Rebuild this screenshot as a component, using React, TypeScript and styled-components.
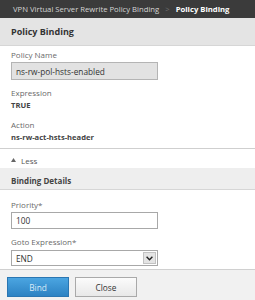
import React from "react";
import styled, { createGlobalStyle } from "styled-components";

const GlobalStyle = createGlobalStyle`
  html, body {
    margin: 0;
    padding: 0;
    background: #ffffff;
    font-family: "Open Sans", "Noto Sans", sans-serif;
  }
`;

const Page = styled.div`
  width: 255px;
  height: 300px;
  display: flex;
  flex-direction: column;
  overflow: hidden;
`;

const TopBar = styled.div`
  height: 18px;
  flex-shrink: 0;
  background: #3b3b3b;
  display: flex;
  align-items: center;
  padding-left: 13px;
  gap: 6px;
  font-size: 7.7px;
  color: #d8d8d8;
  white-space: nowrap;
`;

const Crumb = styled.span<{ $current?: boolean }>`
  color: ${(p) => (p.$current ? "#ffffff" : "#d4d4d4")};
  font-weight: ${(p) => (p.$current ? 700 : 400)};
`;

const Sep = styled.span`
  color: #6f6f6f;
`;

const SectionHead = styled.div<{ $tall?: boolean }>`
  height: ${(p) => (p.$tall ? "27px" : "22px")};
  flex-shrink: 0;
  background: ${(p) => (p.$tall ? "#e4e4e4" : "#eeeeee")};
  border-bottom: 1px solid #d6d6d6;
  display: flex;
  align-items: center;
  padding-left: 11px;
  padding-top: ${(p) => (p.$tall ? "0" : "3px")};
  box-sizing: ${(p) => (p.$tall ? "content-box" : "border-box")};
  font-size: ${(p) => (p.$tall ? "9px" : "8px")};
  font-weight: 700;
  color: ${(p) => (p.$tall ? "#333" : "#444")};
`;

const Body = styled.div<{ $top: number; $bottom: number }>`
  padding: ${(p) => p.$top}px 11px ${(p) => p.$bottom}px;
  display: flex;
  flex-direction: column;
`;

const Label = styled.div`
  font-size: 8px;
  color: #6a6a6a;
  line-height: 12px;
`;

const Value = styled.div<{ $gap?: number }>`
  font-size: 7.6px;
  font-weight: 700;
  color: #444;
  line-height: 13px;
  margin-bottom: ${(p) => p.$gap ?? 0}px;
`;

const Input = styled.div<{ $disabled?: boolean; $h?: number; $top?: number; $gap?: number }>`
  width: 147px;
  height: ${(p) => p.$h ?? 18}px;
  box-sizing: border-box;
  border: 1px solid ${(p) => (p.$disabled ? "#b4b4b4" : "#a8a8a8")};
  background: ${(p) => (p.$disabled ? "#e2e2e2" : "#ffffff")};
  display: flex;
  align-items: center;
  padding-left: 4px;
  font-size: 8.3px;
  color: #333;
  margin-top: ${(p) => p.$top ?? 1}px;
  margin-bottom: ${(p) => p.$gap ?? 7}px;
`;

const Select = styled(Input)`
  justify-content: space-between;
  padding-right: 1px;
`;

const ArrowBox = styled.div`
  width: 13px;
  height: 12px;
  background: #e4e4e4;
  border: 1px solid #c2c2c2;
  box-sizing: border-box;
  display: flex;
  align-items: center;
  justify-content: center;
`;

const Divider = styled.div`
  height: 1px;
  flex-shrink: 0;
  background: #cfcfcf;
`;

const Toggle = styled.div`
  height: 19px;
  flex-shrink: 0;
  box-sizing: border-box;
  padding: 3px 0 0 11px;
  display: flex;
  align-items: center;
  gap: 5px;
  font-size: 8px;
  color: #555;
`;

const Footer = styled.div`
  flex: 1;
  background: #f1f1f1;
  border-top: 1px solid #d0d0d0;
  display: flex;
  gap: 6px;
  padding: 7px 0 0 7px;
`;

const Button = styled.div<{ $primary?: boolean }>`
  width: 62px;
  height: 20px;
  box-sizing: border-box;
  display: flex;
  align-items: center;
  justify-content: center;
  font-size: 8.3px;
  border: 1px solid ${(p) => (p.$primary ? "#2a76b2" : "#a9a9a9")};
  background: ${(p) =>
    p.$primary
      ? "linear-gradient(#4ba5e1, #2c82c3)"
      : "linear-gradient(#fbfbfb, #e8e8e8)"};
  color: ${(p) => (p.$primary ? "#dcecf8" : "#333")};
`;

export default function App() {
  return (
    <Page>
      <GlobalStyle />
      <TopBar>
        <Crumb>VPN Virtual Server Rewrite Policy Binding</Crumb>
        <Sep>&gt;</Sep>
        <Crumb $current>Policy Binding</Crumb>
      </TopBar>
      <SectionHead $tall>Policy Binding</SectionHead>
      <Body $top={3} $bottom={4}>
        <Label>Policy Name</Label>
        <Input $disabled>ns-rw-pol-hsts-enabled</Input>
        <Label>Expression</Label>
        <Value $gap={7}>TRUE</Value>
        <Label>Action</Label>
        <Value>ns-rw-act-hsts-header</Value>
      </Body>
      <Divider />
      <Toggle>
        <svg width="5" height="4" viewBox="0 0 5 4">
          <path d="M0 4 L2.5 0 L5 4 Z" fill="#666" />
        </svg>
        Less
      </Toggle>
      <SectionHead>Binding Details</SectionHead>
      <Body $top={9} $bottom={0}>
        <Label>Priority*</Label>
        <Input $h={17} $gap={7}>100</Input>
        <Label>Goto Expression*</Label>
        <Select $h={16} $top={2} $gap={3}>
          END
          <ArrowBox>
            <svg width="7" height="5" viewBox="0 0 7 5">
              <path d="M0.6 0.8 L3.5 3.8 L6.4 0.8" stroke="#222" strokeWidth="1.4" fill="none" />
            </svg>
          </ArrowBox>
        </Select>
      </Body>
      <Footer>
        <Button $primary>Bind</Button>
        <Button>Close</Button>
      </Footer>
    </Page>
  );
}
